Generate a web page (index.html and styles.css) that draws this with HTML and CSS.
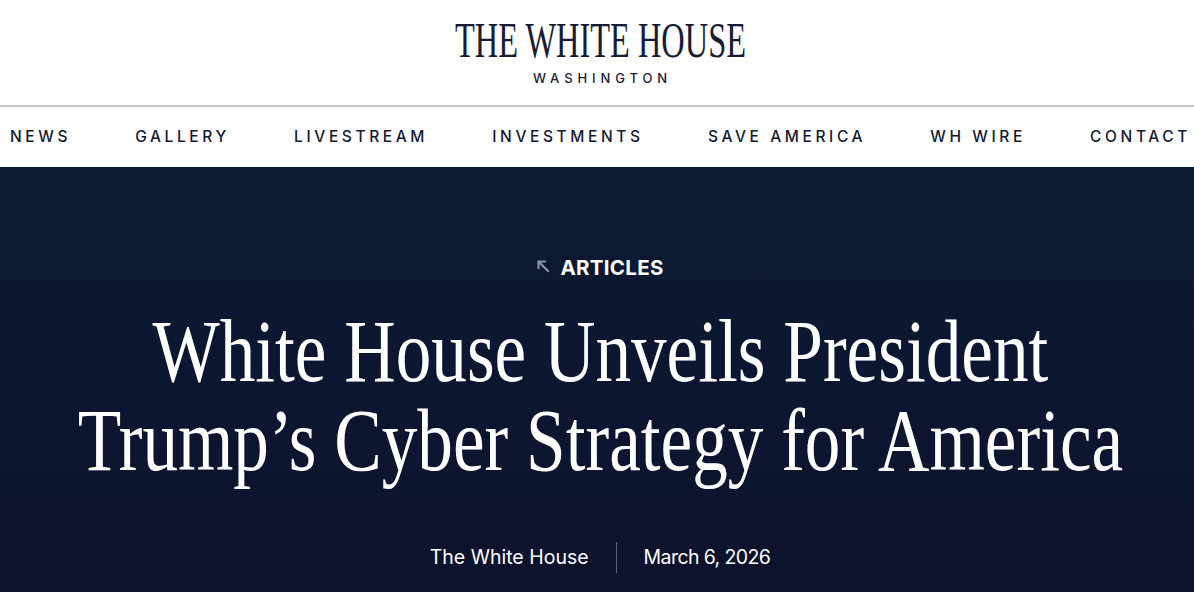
FILE: index.html
```html
<!DOCTYPE html>
<html lang="en">
<head>
<meta charset="utf-8">
<title>White House Unveils President Trump’s Cyber Strategy for America</title>
<link rel="stylesheet" href="styles.css">
</head>
<body>
<header class="masthead">
  <div class="logo">
    <div class="logo-title"><span class="logo-title-inner">THE WHITE HOUSE</span></div>
    <div class="logo-sub">WASHINGTON</div>
  </div>
</header>
<nav class="mainnav">
  <a href="#">NEWS</a>
  <a href="#">GALLERY</a>
  <a href="#">LIVESTREAM</a>
  <a href="#">INVESTMENTS</a>
  <a href="#">SAVE AMERICA</a>
  <a href="#">WH WIRE</a>
  <a href="#">CONTACT</a>
</nav>
<section class="hero">
  <div class="category">
    <svg class="cat-arrow" width="14" height="14" viewBox="0 0 14 14" aria-hidden="true">
      <path d="M2.5 2.5 L12 12 M2.5 2.5 H9 M2.5 2.5 V9" fill="none" stroke="#8b90a0" stroke-width="2.2" stroke-linecap="square"/>
    </svg>
    <span class="cat-label">ARTICLES</span>
  </div>
  <div class="headline-wrap">
    <h1 class="headline">White House Unveils President<br>Trump’s Cyber Strategy for America</h1>
  </div>
  <div class="byline">
    <span class="byline-author">The White House</span>
    <span class="byline-sep"></span>
    <span class="byline-date">March 6, 2026</span>
  </div>
</section>
</body>
</html>
```
FILE: styles.css
```css
* { box-sizing: border-box; }
html, body { margin: 0; padding: 0; }
body {
  background: #ffffff;
  font-family: Inter, "Liberation Sans", sans-serif;
  overflow: hidden;
}
.masthead {
  height: 107px;
  display: flex;
  justify-content: center;
  padding-left: 6px;
  border-bottom: 2px solid #c6c6c6;
}
.logo {
  padding-top: 15px;
  display: flex;
  flex-direction: column;
  align-items: center;
}
.logo-title {
  font-family: "Liberation Serif", serif;
  font-size: 50px;
  line-height: 50px;
  color: #171c36;
  white-space: nowrap;
}
.logo-title-inner {
  display: inline-block;
  transform: scaleX(0.648);
  transform-origin: center;
}
.logo-sub {
  margin-top: 6px;
  font-size: 13px;
  line-height: 15px;
  letter-spacing: 4.9px;
  padding-left: 5px;
  color: #1c2035;
  font-weight: 500;
}
.mainnav {
  height: 60px;
  display: flex;
  justify-content: space-between;
  align-items: center;
  padding: 0 3px 0 10px;
}
.mainnav a {
  color: #121a30;
  text-decoration: none;
  font-size: 15.5px;
  font-weight: 500;
  letter-spacing: 3.6px;
  line-height: 20px;
}
.hero {
  height: 425px;
  background: linear-gradient(180deg, #0b1b33 0%, #0d1530 60%, #0e132d 100%);
  padding: 89px 0 0 6px;
  overflow: hidden;
  color: #ffffff;
}
.category {
  display: flex;
  justify-content: center;
  align-items: center;
  gap: 10px;
  height: 24px;
}
.cat-arrow { margin-top: -4px; }
.cat-label {
  font-size: 20.5px;
  line-height: 24px;
  font-weight: 700;
  letter-spacing: 0.3px;
}
.headline-wrap {
  display: flex;
  justify-content: center;
  margin-top: 27px;
}
.headline {
  margin: 0;
  flex: none;
  font-family: "Liberation Serif", serif;
  font-weight: 400;
  font-size: 89px;
  line-height: 89px;
  text-align: center;
  white-space: nowrap;
  transform: scaleX(0.8);
  transform-origin: center;
}
.byline {
  margin-top: 56px;
  display: flex;
  justify-content: center;
  align-items: center;
  height: 32px;
  font-size: 19.5px;
  line-height: 32px;
}
.byline-date { letter-spacing: -0.6px; }
.byline-sep {
  width: 1px;
  height: 31px;
  background: #5c6275;
  margin: 0 27px;
}
```
